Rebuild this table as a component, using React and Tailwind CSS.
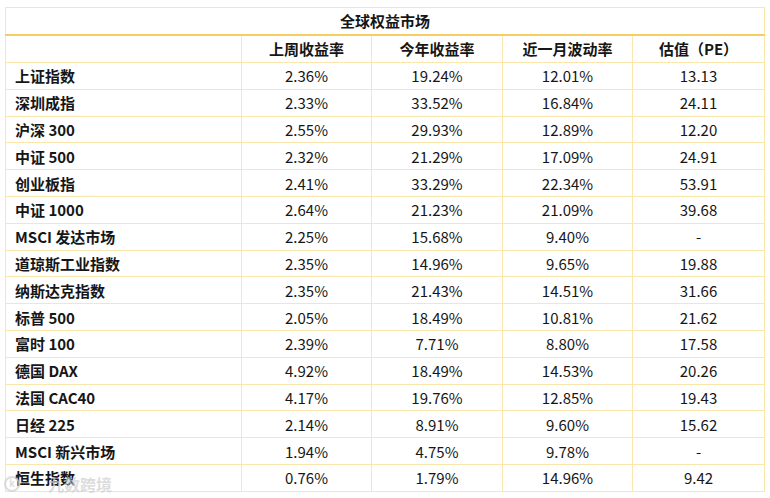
import React from 'react';

const rows = [
  ['上证指数', '2.36%', '19.24%', '12.01%', '13.13'],
  ['深圳成指', '2.33%', '33.52%', '16.84%', '24.11'],
  ['沪深 300', '2.55%', '29.93%', '12.89%', '12.20'],
  ['中证 500', '2.32%', '21.29%', '17.09%', '24.91'],
  ['创业板指', '2.41%', '33.29%', '22.34%', '53.91'],
  ['中证 1000', '2.64%', '21.23%', '21.09%', '39.68'],
  ['MSCI 发达市场', '2.25%', '15.68%', '9.40%', '-'],
  ['道琼斯工业指数', '2.35%', '14.96%', '9.65%', '19.88'],
  ['纳斯达克指数', '2.35%', '21.43%', '14.51%', '31.66'],
  ['标普 500', '2.05%', '18.49%', '10.81%', '21.62'],
  ['富时 100', '2.39%', '7.71%', '8.80%', '17.58'],
  ['德国 DAX', '4.92%', '18.49%', '14.53%', '20.26'],
  ['法国 CAC40', '4.17%', '19.76%', '12.85%', '19.43'],
  ['日经 225', '2.14%', '8.91%', '9.60%', '15.62'],
  ['MSCI 新兴市场', '1.94%', '4.75%', '9.78%', '-'],
  ['恒生指数', '0.76%', '1.79%', '14.96%', '9.42'],
];

const headers = ['上周收益率', '今年收益率', '近一月波动率', '估值（PE）'];

const App = () => {
  return (
    <div
      className="relative w-[770px] h-[498px] bg-white pt-[7px] pl-[5px] text-[#161616]"
      style={{ fontFamily: '"Noto Sans CJK SC", "Noto Sans", sans-serif' }}
    >
      <table className="border-collapse w-[759px] table-fixed text-[15px] leading-none">
        <colgroup>
          <col className="w-[236px]" />
          <col className="w-[130px]" />
          <col className="w-[131px]" />
          <col className="w-[130px]" />
          <col className="w-[132px]" />
        </colgroup>
        <thead>
          <tr className="h-[27px]">
            <th
              colSpan={5}
              className="border border-[#fbe6ac] border-b-2 border-b-[#f5cd62] font-bold text-center"
            >
              全球权益市场
            </th>
          </tr>
          <tr className="h-[28px]">
            <th className="border border-[#fbe6ac]"></th>
            {headers.map((h) => (
              <th key={h} className="border border-[#fbe6ac] font-bold text-center">
                {h}
              </th>
            ))}
          </tr>
        </thead>
        <tbody>
          {rows.map((r) => (
            <tr key={r[0]} className="h-[26.8px]">
              <td className="border border-[#fbe6ac] font-bold pl-[9px] text-left">{r[0]}</td>
              {r.slice(1).map((v, i) => (
                <td key={i} className="border border-[#fbe6ac] text-center">
                  {v}
                </td>
              ))}
            </tr>
          ))}
        </tbody>
      </table>

      {/* watermark */}
      <div className="absolute left-[4px] top-[472px] flex items-center text-[16px] font-bold text-[#cfcfcf] opacity-70 pointer-events-none">
        <span className="inline-flex items-center justify-center w-[16px] h-[16px] rounded-full border-2 border-[#cfcfcf] text-[9px]">k</span>
        <span className="ml-[28px]">九数跨境</span>
      </div>
    </div>
  );
};

export default App;
